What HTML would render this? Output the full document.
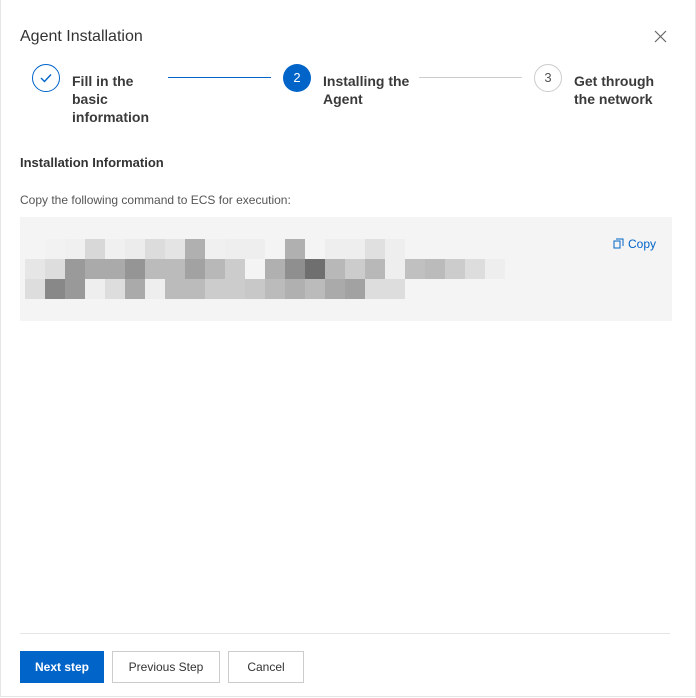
<!DOCTYPE html>
<html><head><meta charset="utf-8"><style>
body{margin:0;width:696px;height:698px;background:#fff;font-family:"Liberation Sans",sans-serif;position:relative;overflow:hidden;color:#333}
.a{position:absolute}
.c{position:absolute;width:20px;height:20px}
</style></head><body>
<div class="a" style="left:0;top:0;width:694px;height:696px;border:1px solid #e5e5e5;border-top:none"></div>
<div class="a" style="left:20px;top:28px;font-size:16px;color:#333">Agent Installation</div>
<svg class="a" style="left:654px;top:30px" width="13" height="13" viewBox="0 0 13 13"><path d="M1 1L12 12M12 1L1 12" stroke="#666" stroke-width="1.2"/></svg>

<div class="a" style="left:32px;top:64px;width:28px;height:28px;border:1px solid #0064c8;border-radius:50%;box-sizing:border-box"></div>
<svg class="a" style="left:39px;top:72px" width="14" height="12"><path d="M2 6L5.5 9.5L12 2.5" stroke="#0064c8" stroke-width="1.4" fill="none"/></svg>
<div class="a" style="left:72px;top:72px;font-size:14px;font-weight:bold;line-height:18px;color:#3a3a3a">Fill in the<br>basic<br>information</div>
<div class="a" style="left:168px;top:77px;width:103px;height:1px;background:#0064c8"></div>

<div class="a" style="left:283px;top:64px;width:28px;height:28px;background:#0064c8;border-radius:50%;color:#fff;font-size:13px;text-align:center;line-height:28px">2</div>
<div class="a" style="left:323px;top:72px;font-size:14px;font-weight:bold;line-height:18px;color:#3a3a3a">Installing the<br>Agent</div>
<div class="a" style="left:419px;top:77px;width:103px;height:1px;background:#ccc"></div>

<div class="a" style="left:534px;top:64px;width:28px;height:28px;border:1px solid #ccc;border-radius:50%;box-sizing:border-box;font-size:13px;text-align:center;line-height:26px;color:#555">3</div>
<div class="a" style="left:574px;top:72px;font-size:14px;font-weight:bold;line-height:18px;color:#3a3a3a">Get through<br>the network</div>

<div class="a" style="left:20px;top:155px;font-size:13px;font-weight:bold;color:#333">Installation Information</div>
<div class="a" style="left:20px;top:193px;font-size:12px;color:#555">Copy the following command to ECS for execution:</div>

<div class="a" style="left:20px;top:217px;width:652px;height:104px;background:#f4f4f4"></div>
<svg class="a" style="left:613px;top:238px" width="11" height="11"><path d="M3 1h7v7M1 3h6v7H1z" stroke="#0064c8" fill="none"/></svg>
<div class="a" style="left:628px;top:237px;font-size:12px;color:#0064c8">Copy</div>

<div class="a" style="left:20px;top:633px;width:650px;height:1px;background:#e5e5e5"></div>
<div class="a" style="left:20px;top:651px;width:84px;height:32px;background:#0064c8;color:#fff;font-size:12px;font-weight:bold;text-align:center;line-height:32px">Next step</div>
<div class="a" style="left:112px;top:651px;width:108px;height:32px;border:1px solid #ccc;box-sizing:border-box;font-size:12px;text-align:center;line-height:30px;color:#333">Previous Step</div>
<div class="a" style="left:228px;top:651px;width:76px;height:32px;border:1px solid #ccc;box-sizing:border-box;font-size:12px;text-align:center;line-height:30px;color:#333">Cancel</div>

<div class="a" style="left:0;top:0">
<div class="c" style="left:45px;top:239px;background:#f2f2f2"></div>
<div class="c" style="left:65px;top:239px;background:#f0f0f0"></div>
<div class="c" style="left:85px;top:239px;background:#d8d8d8"></div>
<div class="c" style="left:105px;top:239px;background:#f0f0f0"></div>
<div class="c" style="left:125px;top:239px;background:#ececec"></div>
<div class="c" style="left:145px;top:239px;background:#dcdcdc"></div>
<div class="c" style="left:165px;top:239px;background:#e4e4e4"></div>
<div class="c" style="left:185px;top:239px;background:#b0b0b0"></div>
<div class="c" style="left:205px;top:239px;background:#f0f0f0"></div>
<div class="c" style="left:225px;top:239px;background:#eeeeee"></div>
<div class="c" style="left:245px;top:239px;background:#eeeeee"></div>
<div class="c" style="left:285px;top:239px;background:#b0b0b0"></div>
<div class="c" style="left:325px;top:239px;background:#eeeeee"></div>
<div class="c" style="left:345px;top:239px;background:#eeeeee"></div>
<div class="c" style="left:365px;top:239px;background:#e0e0e0"></div>
<div class="c" style="left:385px;top:239px;background:#eeeeee"></div>
<div class="c" style="left:25px;top:259px;width:20px;background:#e6e6e6"></div>
<div class="c" style="left:45px;top:259px;background:#dddddd"></div>
<div class="c" style="left:65px;top:259px;background:#9a9a9a"></div>
<div class="c" style="left:85px;top:259px;background:#aaaaaa"></div>
<div class="c" style="left:105px;top:259px;background:#aaaaaa"></div>
<div class="c" style="left:125px;top:259px;background:#959595"></div>
<div class="c" style="left:145px;top:259px;background:#bbbbbb"></div>
<div class="c" style="left:165px;top:259px;background:#bbbbbb"></div>
<div class="c" style="left:185px;top:259px;background:#a2a2a2"></div>
<div class="c" style="left:205px;top:259px;background:#b8b8b8"></div>
<div class="c" style="left:225px;top:259px;background:#cccccc"></div>
<div class="c" style="left:245px;top:259px;background:#f4f4f4"></div>
<div class="c" style="left:265px;top:259px;background:#b0b0b0"></div>
<div class="c" style="left:285px;top:259px;background:#8f8f8f"></div>
<div class="c" style="left:305px;top:259px;background:#6f6f6f"></div>
<div class="c" style="left:325px;top:259px;background:#b8b8b8"></div>
<div class="c" style="left:345px;top:259px;background:#cccccc"></div>
<div class="c" style="left:365px;top:259px;background:#b8b8b8"></div>
<div class="c" style="left:385px;top:259px;background:#eeeeee"></div>
<div class="c" style="left:405px;top:259px;background:#c0c0c0"></div>
<div class="c" style="left:425px;top:259px;background:#bbbbbb"></div>
<div class="c" style="left:445px;top:259px;background:#cccccc"></div>
<div class="c" style="left:465px;top:259px;background:#dddddd"></div>
<div class="c" style="left:485px;top:259px;background:#eeeeee"></div>
<div class="c" style="left:25px;top:279px;background:#dddddd"></div>
<div class="c" style="left:45px;top:279px;background:#888888"></div>
<div class="c" style="left:65px;top:279px;background:#999999"></div>
<div class="c" style="left:85px;top:279px;background:#eeeeee"></div>
<div class="c" style="left:105px;top:279px;background:#dddddd"></div>
<div class="c" style="left:125px;top:279px;background:#aaaaaa"></div>
<div class="c" style="left:145px;top:279px;background:#eeeeee"></div>
<div class="c" style="left:165px;top:279px;background:#bbbbbb"></div>
<div class="c" style="left:185px;top:279px;background:#bbbbbb"></div>
<div class="c" style="left:205px;top:279px;background:#cccccc"></div>
<div class="c" style="left:225px;top:279px;background:#cccccc"></div>
<div class="c" style="left:245px;top:279px;background:#c8c8c8"></div>
<div class="c" style="left:265px;top:279px;background:#bbbbbb"></div>
<div class="c" style="left:285px;top:279px;background:#b0b0b0"></div>
<div class="c" style="left:305px;top:279px;background:#bbbbbb"></div>
<div class="c" style="left:325px;top:279px;background:#aaaaaa"></div>
<div class="c" style="left:345px;top:279px;background:#a2a2a2"></div>
<div class="c" style="left:365px;top:279px;background:#dddddd"></div>
<div class="c" style="left:385px;top:279px;background:#dddddd"></div>
</div>
</body></html>
